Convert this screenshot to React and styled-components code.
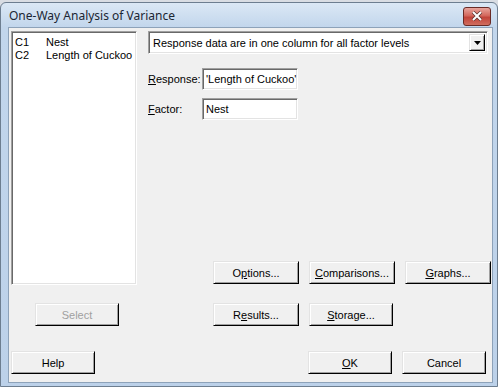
import styled, { createGlobalStyle } from 'styled-components';

const Global = createGlobalStyle`
  html, body { margin: 0; padding: 0; background: #d9dde3; }
  body { width: 498px; height: 387px; overflow: hidden; }
`;

const Window = styled.div`
  box-sizing: border-box;
  width: 498px;
  height: 387px;
  padding-top: 2px;
  display: flex;
  flex-direction: column;
`;

const Frame = styled.div`
  box-sizing: border-box;
  flex: 1;
  display: flex;
  flex-direction: column;
  border: 1px solid #6d7e90;
  border-radius: 6px 6px 0 0;
  background: linear-gradient(#dbe8f5, #c2d6ec 24px, #bcd1e9);
  padding: 0 4px 3px 7px;
  font-family: 'Liberation Sans', Arial, sans-serif;
  font-size: 11px;
  color: #000;
`;

const TitleBar = styled.div`
  height: 24px;
  display: flex;
  align-items: center;
  justify-content: space-between;
`;

const Title = styled.span`
  font-family: 'Noto Sans', 'Liberation Sans', sans-serif;
  font-size: 12px;
  padding-left: 1px;
  color: #1b2633;
`;

const CloseButton = styled.div`
  width: 26px;
  height: 17px;
  margin-top: 2px;
  margin-right: 2px;
  border: 1px solid #6a2b26;
  border-radius: 3px;
  background: linear-gradient(#e8a59d, #d3675c 45%, #c2443a 55%, #d06d5e);
  display: flex;
  align-items: center;
  justify-content: center;
  svg { display: block; }
`;

const Client = styled.div`
  flex: 1;
  display: flex;
  flex-direction: column;
  background: #f0f0f0;
  border: 1px solid #8da2b9;
  padding: 3px 3px 8px 2px;
`;

const Main = styled.div`
  display: flex;
`;

const LeftCol = styled.div`
  width: 126px;
  flex-shrink: 0;
  display: flex;
  flex-direction: column;
  gap: 18px;
`;

const ListBox = styled.div`
  box-sizing: border-box;
  height: 254px;
  background: #fff;
  border: 1px solid;
  border-color: #a0a0a0 #fff #fff #a0a0a0;
  box-shadow: inset 1px 1px 0 #696969, inset -1px -1px 0 #e3e3e3;
  padding: 4px 3px;
  overflow: hidden;
`;

const ListItem = styled.div`
  display: flex;
  height: 13px;
  line-height: 13px;
  white-space: nowrap;
  span:first-child { width: 31px; flex-shrink: 0; }
`;

const RightCol = styled.div`
  flex: 1;
  margin-left: 11px;
  display: flex;
  flex-direction: column;
`;

const Combo = styled.div`
  box-sizing: border-box;
  width: 340px;
  height: 23px;
  display: flex;
  align-items: center;
  background: #fff;
  border: 1px solid;
  border-color: #a0a0a0 #fff #fff #a0a0a0;
  box-shadow: inset 1px 1px 0 #696969, inset -1px -1px 0 #e3e3e3;
  padding: 2px 2px 2px 4px;
`;

const ComboText = styled.span`
  flex: 1;
  white-space: nowrap;
`;

const ComboArrow = styled.div`
  box-sizing: border-box;
  width: 16px;
  height: 17px;
  background: #f0f0f0;
  border: 1px solid;
  border-color: #e3e3e3 #000 #000 #e3e3e3;
  box-shadow: inset 1px 1px 0 #fff, inset -1px -1px 0 #a0a0a0;
  display: flex;
  align-items: center;
  justify-content: center;
`;

const Fields = styled.div`
  margin-top: 14px;
  display: flex;
  flex-direction: column;
  gap: 8px;
`;

const FieldRow = styled.div`
  display: flex;
  align-items: center;
`;

const Label = styled.span`
  width: 54px;
`;

const TextBox = styled.div`
  box-sizing: border-box;
  width: 96px;
  height: 22px;
  background: #fff;
  border: 1px solid;
  border-color: #a0a0a0 #fff #fff #a0a0a0;
  box-shadow: inset 1px 1px 0 #696969, inset -1px -1px 0 #e3e3e3;
  padding: 0 3px;
  line-height: 20px;
  white-space: nowrap;
  overflow: hidden;
`;

const ButtonRows = styled.div`
  margin-top: auto;
  padding-left: 65px;
  display: flex;
  flex-direction: column;
  gap: 19px;
`;

const ButtonRow = styled.div`
  display: flex;
  gap: 10px;
`;

const Button = styled.div`
  box-sizing: border-box;
  width: ${(p) => p.$w ?? 86}px;
  height: 23px;
  margin-left: ${(p) => p.$ml ?? 0}px;
  background: #f0f0f0;
  border: 1px solid;
  border-color: #e3e3e3 #000 #000 #e3e3e3;
  box-shadow: inset 1px 1px 0 #fff, inset -1px -1px 0 #a0a0a0;
  display: flex;
  align-items: center;
  justify-content: center;
  white-space: nowrap;
  color: ${(p) => (p.$disabled ? '#a0a0a0' : '#000')};
  flex-shrink: 0;
`;

const Bottom = styled.div`
  margin-top: 25px;
  display: flex;
  align-items: center;
`;

const BottomRight = styled.div`
  margin-left: auto;
  margin-right: 3px;
  display: flex;
  gap: 10px;
`;

const U = styled.span`
  text-decoration: underline;
`;

export default function App() {
  return (
    <>
      <Global />
      <Window>
        <Frame>
          <TitleBar>
            <Title>One-Way Analysis of Variance</Title>
            <CloseButton>
              <svg width="12" height="10" viewBox="0 0 12 10">
                <path d="M2 1 L10 9 M10 1 L2 9" stroke="#5a3330" strokeWidth="3.4" />
                <path d="M2 1 L10 9 M10 1 L2 9" stroke="#fff" strokeWidth="2" />
              </svg>
            </CloseButton>
          </TitleBar>
          <Client>
            <Main>
              <LeftCol>
                <ListBox>
                  <ListItem><span>C1</span><span>Nest</span></ListItem>
                  <ListItem><span>C2</span><span>Length of Cuckoo</span></ListItem>
                </ListBox>
                <Button $w={84} $ml={24} $disabled>Select</Button>
              </LeftCol>
              <RightCol>
                <Combo>
                  <ComboText>Response data are in one column for all factor levels</ComboText>
                  <ComboArrow>
                    <svg width="7" height="4" viewBox="0 0 7 4">
                      <path d="M0 0 H7 L3.5 4 Z" fill="#000" />
                    </svg>
                  </ComboArrow>
                </Combo>
                <Fields>
                  <FieldRow>
                    <Label><U>R</U>esponse:</Label>
                    <TextBox>'Length of Cuckoo'</TextBox>
                  </FieldRow>
                  <FieldRow>
                    <Label><U>F</U>actor:</Label>
                    <TextBox>Nest</TextBox>
                  </FieldRow>
                </Fields>
                <ButtonRows>
                  <ButtonRow>
                    <Button>O<U>p</U>tions...</Button>
                    <Button><U>C</U>omparisons...</Button>
                    <Button><U>G</U>raphs...</Button>
                  </ButtonRow>
                  <ButtonRow>
                    <Button>R<U>e</U>sults...</Button>
                    <Button $w={84}><U>S</U>torage...</Button>
                  </ButtonRow>
                </ButtonRows>
              </RightCol>
            </Main>
            <Bottom>
              <Button $w={84}>Help</Button>
              <BottomRight>
                <Button $w={84}><U>O</U>K</Button>
                <Button $w={84}>Cancel</Button>
              </BottomRight>
            </Bottom>
          </Client>
        </Frame>
      </Window>
    </>
  );
}
